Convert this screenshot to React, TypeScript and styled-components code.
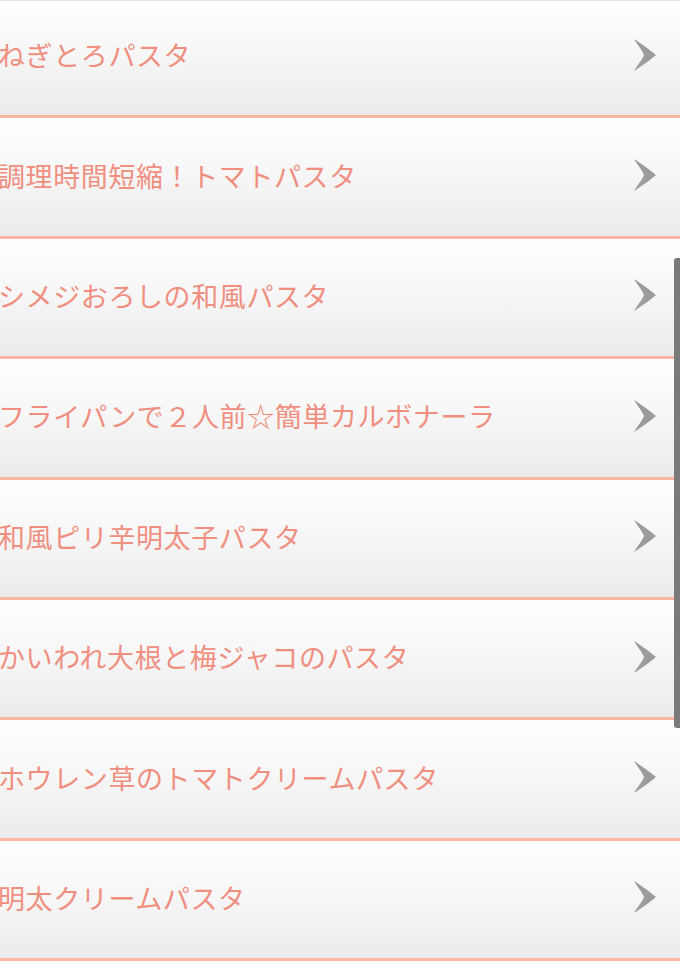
import styled, { createGlobalStyle } from "styled-components";

type Recipe = {
    id: number;
    title: string;
};

const recipes: Recipe[] = [
    { id: 1, title: "ねぎとろパスタ" },
    { id: 2, title: "調理時間短縮！トマトパスタ" },
    { id: 3, title: "シメジおろしの和風パスタ" },
    { id: 4, title: "フライパンで２人前☆簡単カルボナーラ" },
    { id: 5, title: "和風ピリ辛明太子パスタ" },
    { id: 6, title: "かいわれ大根と梅ジャコのパスタ" },
    { id: 7, title: "ホウレン草のトマトクリームパスタ" },
    { id: 8, title: "明太クリームパスタ" },
];

const GlobalStyle = createGlobalStyle`
    html, body {
        margin: 0;
        padding: 0;
        background: #ffffff;
        overflow: hidden;
    }
    body {
        font-family: "Noto Sans CJK JP", "Noto Sans", sans-serif;
    }
`;

const Screen = styled.div`
    position: relative;
    width: 680px;
    height: 965px;
    overflow: hidden;
    background: #ffffff;
    border-top: 1px solid #e4e4e4;
    box-sizing: border-box;
`;

const List = styled.ul`
    list-style: none;
    margin: -3px 0 0 0;
    padding: 0;
`;

const Row = styled.li`
    display: flex;
    align-items: center;
    justify-content: space-between;
    height: 120.4px;
    padding: 0 23px 4px 0;
    box-sizing: border-box;
    background: linear-gradient(to bottom, #ffffff 0%, #f7f7f7 45%, #ebebeb 100%);
    border-bottom: 3px solid #f7b7a2;
    box-shadow: inset 0 1px 0 #ffffff;
`;

const Title = styled.span`
    margin-left: -2px;
    font-size: 27px;
    letter-spacing: 0.6px;
    color: #f08f80;
    white-space: nowrap;
`;

const Chevron = styled.svg`
    width: 25px;
    height: 34px;
    flex-shrink: 0;
`;

const ScrollThumb = styled.div`
    position: absolute;
    right: 0;
    top: 257px;
    width: 6px;
    height: 470px;
    border-radius: 3px 0 0 3px;
    background: #7a7a7a;
`;

function Arrow() {
    return (
        <Chevron viewBox="0 0 25 34">
            <path
                d="M2 1 C8 5 17 11 24 17 C17 23 8 29 2 33 C5 28 10 22 12 17 C10 12 5 6 2 1 Z"
                fill="#9c9c9c"
            />
        </Chevron>
    );
}

function App() {
    return (
        <>
            <GlobalStyle />
            <Screen>
                <List>
                    {recipes.map(recipe => (
                        <Row key={recipe.id}>
                            <Title>{recipe.title}</Title>
                            <Arrow />
                        </Row>
                    ))}
                </List>
                <ScrollThumb />
            </Screen>
        </>
    );
}

export default App;
